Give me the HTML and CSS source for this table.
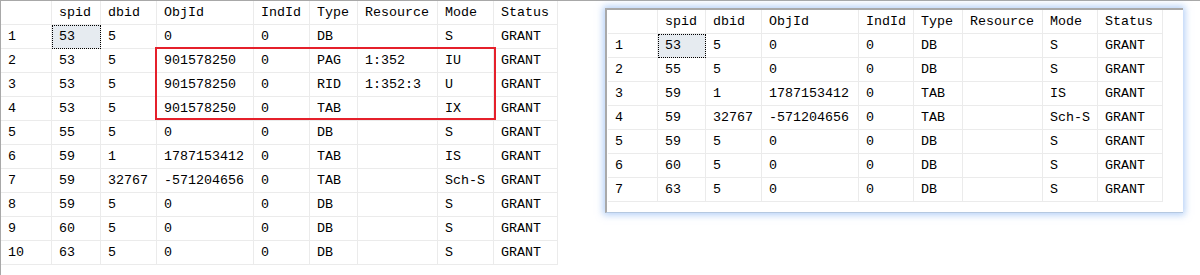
FILE: index.html
```html
<!DOCTYPE html>
<html>
<head>
<meta charset="utf-8">
<link rel="stylesheet" href="styles.css">
</head>
<body>
<div class="page">
  <div class="left">
    <table class="grid">
      <thead>
        <tr><th class="c-rh"></th><th class="c-spid">spid</th><th class="c-dbid">dbid</th><th class="c-obj">ObjId</th><th class="c-ind">IndId</th><th class="c-type">Type</th><th class="c-res">Resource</th><th class="c-mode">Mode</th><th class="c-stat">Status</th></tr>
      </thead>
      <tbody>
        <tr><td>1</td><td class="sel">53</td><td>5</td><td>0</td><td>0</td><td>DB</td><td></td><td>S</td><td>GRANT</td></tr>
        <tr><td>2</td><td>53</td><td>5</td><td>901578250</td><td>0</td><td>PAG</td><td>1:352</td><td>IU</td><td>GRANT</td></tr>
        <tr><td>3</td><td>53</td><td>5</td><td>901578250</td><td>0</td><td>RID</td><td>1:352:3</td><td>U</td><td>GRANT</td></tr>
        <tr><td>4</td><td>53</td><td>5</td><td>901578250</td><td>0</td><td>TAB</td><td></td><td>IX</td><td>GRANT</td></tr>
        <tr><td>5</td><td>55</td><td>5</td><td>0</td><td>0</td><td>DB</td><td></td><td>S</td><td>GRANT</td></tr>
        <tr><td>6</td><td>59</td><td>1</td><td>1787153412</td><td>0</td><td>TAB</td><td></td><td>IS</td><td>GRANT</td></tr>
        <tr><td>7</td><td>59</td><td>32767</td><td>-571204656</td><td>0</td><td>TAB</td><td></td><td>Sch-S</td><td>GRANT</td></tr>
        <tr><td>8</td><td>59</td><td>5</td><td>0</td><td>0</td><td>DB</td><td></td><td>S</td><td>GRANT</td></tr>
        <tr><td>9</td><td>60</td><td>5</td><td>0</td><td>0</td><td>DB</td><td></td><td>S</td><td>GRANT</td></tr>
        <tr><td>10</td><td>63</td><td>5</td><td>0</td><td>0</td><td>DB</td><td></td><td>S</td><td>GRANT</td></tr>
      </tbody>
    </table>
    <div class="highlight"></div>
  </div>
  <div class="window">
    <table class="grid grid-r">
      <thead>
        <tr><th class="r-rh"></th><th class="r-spid">spid</th><th class="r-dbid">dbid</th><th class="r-obj">ObjId</th><th class="r-ind">IndId</th><th class="r-type">Type</th><th class="r-res">Resource</th><th class="r-mode">Mode</th><th class="r-stat">Status</th></tr>
      </thead>
      <tbody>
        <tr><td>1</td><td class="sel">53</td><td>5</td><td>0</td><td>0</td><td>DB</td><td></td><td>S</td><td>GRANT</td></tr>
        <tr><td>2</td><td>55</td><td>5</td><td>0</td><td>0</td><td>DB</td><td></td><td>S</td><td>GRANT</td></tr>
        <tr><td>3</td><td>59</td><td>1</td><td>1787153412</td><td>0</td><td>TAB</td><td></td><td>IS</td><td>GRANT</td></tr>
        <tr><td>4</td><td>59</td><td>32767</td><td>-571204656</td><td>0</td><td>TAB</td><td></td><td>Sch-S</td><td>GRANT</td></tr>
        <tr><td>5</td><td>59</td><td>5</td><td>0</td><td>0</td><td>DB</td><td></td><td>S</td><td>GRANT</td></tr>
        <tr><td>6</td><td>60</td><td>5</td><td>0</td><td>0</td><td>DB</td><td></td><td>S</td><td>GRANT</td></tr>
        <tr><td>7</td><td>63</td><td>5</td><td>0</td><td>0</td><td>DB</td><td></td><td>S</td><td>GRANT</td></tr>
      </tbody>
    </table>
  </div>
</div>
</body>
</html>
```

FILE: styles.css
```css
html, body {
  margin: 0;
  padding: 0;
  background: #ffffff;
}

.page {
  display: flex;
  align-items: flex-start;
  width: 1200px;
  height: 275px;
  box-sizing: border-box;
  border-top: 1px solid #a8a8a8;
  font-family: "Liberation Mono", "DejaVu Sans Mono", monospace;
  font-size: 13.333px;
  color: #000;
}

.left {
  position: relative;
  height: 274px;
  border-left: 1px solid #a8a8a8;
}

.grid {
  border-collapse: separate;
  border-spacing: 0;
  table-layout: fixed;
}

.grid th,
.grid td {
  box-sizing: border-box;
  height: 24px;
  padding: 1px 0 0 7px;
  border-right: 1px solid #ebebeb;
  border-bottom: 1px solid #ebebeb;
  text-align: left;
  font-weight: normal;
  white-space: nowrap;
  overflow: hidden;
  line-height: 22px;
}

.grid th {
  height: 23px;
}

.grid td.sel {
  background: #e6ebf0;
  outline: 1px dotted #000;
  outline-offset: -1px;
}

.c-rh { width: 51px; }
.c-spid { width: 49px; }
.c-dbid { width: 56px; }
.c-obj { width: 97px; }
.c-ind { width: 56px; }
.c-type { width: 48px; }
.c-res { width: 80px; }
.c-mode { width: 56px; }
.c-stat { width: 64px; }

.highlight {
  position: absolute;
  left: 154px;
  top: 46px;
  width: 341px;
  height: 73px;
  box-sizing: border-box;
  border: 2px solid #e5202b;
}

.window {
  margin-left: 47px;
  margin-top: 7px;
  width: 578px;
  height: 205px;
  box-sizing: border-box;
  background: #fff;
  border-top: 2px solid #a9a9a9;
  border-left: 2px solid #a9a9a9;
  border-bottom: 1px solid #b5c8e0;
  box-shadow: 0 0 7px 2px rgba(120, 170, 240, 0.55);
  padding-left: 1px;
}

.grid-r th {
  height: 23px;
}

.r-rh { width: 50px; }
.r-spid { width: 48px; }
.r-dbid { width: 56px; }
.r-obj { width: 97px; }
.r-ind { width: 55px; }
.r-type { width: 49px; }
.r-res { width: 80px; }
.r-mode { width: 55px; }
.r-stat { width: 65px; }
```
